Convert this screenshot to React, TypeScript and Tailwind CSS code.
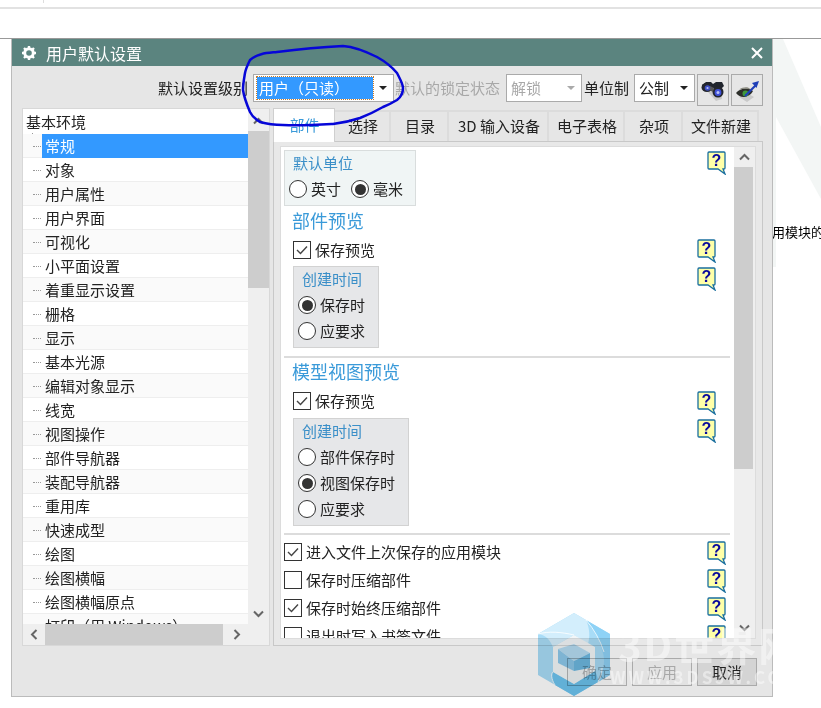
import type { ReactNode } from "react";

const treeItems = [
  "常规",
  "对象",
  "用户属性",
  "用户界面",
  "可视化",
  "小平面设置",
  "着重显示设置",
  "栅格",
  "显示",
  "基本光源",
  "编辑对象显示",
  "线宽",
  "视图操作",
  "部件导航器",
  "装配导航器",
  "重用库",
  "快速成型",
  "绘图",
  "绘图横幅",
  "绘图横幅原点",
  "打印（用 Windows）",
];

const tabs = [
  { label: "部件", width: "w-[62px]" },
  { label: "选择", width: "w-[56px]" },
  { label: "目录", width: "w-[58px]" },
  { label: "3D 输入设备", width: "w-[100px]" },
  { label: "电子表格", width: "w-[76px]" },
  { label: "杂项", width: "w-[58px]" },
  { label: "文件新建", width: "w-[76px]" },
];

function Help() {
  return (
    <svg width="19" height="24" viewBox="0 0 19 24" className="shrink-0">
      <path
        d="M2 1h15a1 1 0 0 1 1 1v15a1 1 0 0 1-1 1h-1l2 5-7-5H2a1 1 0 0 1-1-1V2a1 1 0 0 1 1-1z"
        fill="#ffffa8"
        stroke="#1a6f9e"
        strokeWidth="1.3"
      />
      <text
        x="9.5"
        y="15"
        textAnchor="middle"
        fontSize="16"
        fontWeight="700"
        fontFamily="Liberation Sans, sans-serif"
        fill="#0a0a9c"
      >
        ?
      </text>
    </svg>
  );
}

function Radio({ checked, label }: { checked?: boolean; label: string }) {
  return (
    <div className="flex items-center gap-[4px] h-[26px]">
      <span className="flex h-[18px] w-[18px] items-center justify-center rounded-full border border-[#333] bg-white">
        {checked && <span className="h-[11px] w-[11px] rounded-full bg-[#333]" />}
      </span>
      <span>{label}</span>
    </div>
  );
}

function Check({ checked, label }: { checked?: boolean; label: string }) {
  return (
    <div className="flex items-center gap-[4px]">
      <span className="flex h-[18px] w-[18px] items-center justify-center border border-[#333] bg-white">
        {checked && (
          <svg width="12" height="10" viewBox="0 0 12 10">
            <path d="M1 5l3.5 3.5L11 1.5" fill="none" stroke="#444" strokeWidth="1.4" />
          </svg>
        )}
      </span>
      <span>{label}</span>
    </div>
  );
}

function IconButton({ children }: { children: ReactNode }) {
  return (
    <div className="flex h-[32px] w-[32px] items-center justify-center border border-[#aaa] bg-[#e6e6e6]">
      {children}
    </div>
  );
}

function Combo({
  text,
  width,
  disabled,
  children,
}: {
  text?: string;
  width: string;
  disabled?: boolean;
  children?: ReactNode;
}) {
  return (
    <div className={`flex h-[28px] items-center justify-between border border-[#aaa] bg-white pl-[3px] pr-[4px] ${width}`}>
      {children ?? <span className={disabled ? "pl-[1px] text-[#a8a8a8]" : "pl-[1px]"}>{text}</span>}
      <span
        className={`mr-[2px] h-0 w-0 border-x-[4px] border-t-[4px] border-x-transparent ${disabled ? "border-t-[#aaa]" : "border-t-[#222]"}`}
      />
    </div>
  );
}

function CreateTime({ width, height, options }: { width: string; height: string; options: { label: string; checked?: boolean }[] }) {
  return (
    <div className={`ml-[9px] border border-[#d2d2d2] bg-[#e6e7e9] pl-[4px] pt-[1px] ${width} ${height}`}>
      <div className="mb-[2px] pl-[4px] leading-[22px] text-[#3a8fc8]">创建时间</div>
      {options.map((o) => (
        <Radio key={o.label} label={o.label} checked={o.checked} />
      ))}
    </div>
  );
}

export default function App() {
  return (
    <div
      className="relative h-[708px] w-[821px] overflow-hidden bg-white text-[15px] text-[#222]"
      style={{ fontFamily: '"Noto Sans CJK SC", "Noto Sans", sans-serif' }}
    >
      {/* page behind the dialog */}
      <div className="h-[9px] border-b-2 border-[#e2e2e2]">
        <div className="ml-[43px] h-[3px] w-px bg-[#ddd]" />
      </div>
      <div className="h-[30px] border-b border-[#999]" />
      <svg className="absolute left-[773px] top-[39px]" width="48" height="240" viewBox="0 0 48 240">
        <path d="M0 0h10l38 88v72L3 78v150H0z" fill="#f3f6f5" />
      </svg>
      <div className="absolute left-[772px] top-[223px] text-[13px] leading-[18px] text-black whitespace-nowrap">
        用模块的设
      </div>

      {/* dialog */}
      <div className="relative ml-[11px] h-[658px] w-[762px] border-x border-b border-[#bbb] bg-[#e6e6e6]">
        <div className="flex h-[27px] items-center bg-[#5b847f] pl-[9px] pr-[9px] text-[16px] text-white">
          <svg width="16" height="16" viewBox="0 0 16 16">
            <circle cx="8" cy="8" r="4.3" fill="none" stroke="#fff" strokeWidth="3" />
            <path
              d="M8 1v2.5M8 12.5V15M1 8h2.5M12.5 8H15M3 3l1.8 1.8M11.2 11.2L13 13M13 3l-1.8 1.8M4.8 11.2L3 13"
              stroke="#fff"
              strokeWidth="2.4"
            />
          </svg>
          <span className="ml-[9px]">用户默认设置</span>
          <svg className="ml-auto" width="12" height="12" viewBox="0 0 12 12">
            <path d="M1 1l10 10M11 1L1 11" stroke="#fff" strokeWidth="2" />
          </svg>
        </div>

        {/* settings row */}
        <div className="mt-[8px] flex h-[32px] items-start pl-[146px]">
          <span className="h-[28px] leading-[28px]">默认设置级别</span>
          <div className="ml-[5px]">
            <Combo width="w-[141px]">
              <span className="bg-[#3399ff] pl-[2px] pr-[24px] leading-[22px] text-white outline-1 outline-dotted outline-[#c77b2a]">
                用户（只读）
              </span>
            </Combo>
          </div>
          <span className="ml-[1px] h-[28px] leading-[28px] text-[#a8a8a8]">默认的锁定状态</span>
          <div className="ml-[6px]">
            <Combo width="w-[76px]" text="解锁" disabled />
          </div>
          <span className="ml-[2px] h-[28px] leading-[28px]">单位制</span>
          <div className="ml-[5px]">
            <Combo width="w-[61px]" text="公制" />
          </div>
          <div className="ml-[2px]">
            <IconButton>
              <svg width="30" height="30" viewBox="0 0 30 30">
                <path d="M10 17l8 9 6-2-1-10z" fill="#c9c9c9" />
                <path d="M4 10l4-3h5l2 2 3-2h6l2 4-2 2H4z" fill="#20242c" />
                <ellipse cx="9" cy="12.5" rx="5.5" ry="4.5" fill="#23262e" />
                <ellipse cx="20" cy="17" rx="5.5" ry="5.5" fill="#23262e" />
                <path d="M12 11l4 2-1 4-4-2z" fill="#555" />
                <circle cx="9.5" cy="13" r="2.8" fill="#3f50c4" />
                <circle cx="20" cy="17.5" r="3.4" fill="#3f50d8" />
                <circle cx="20" cy="17.5" r="1.5" fill="#b9c2f5" />
                <circle cx="9.5" cy="13" r="1.1" fill="#b9c2f5" />
              </svg>
            </IconButton>
          </div>
          <div className="ml-[2px]">
            <IconButton>
              <svg width="30" height="30" viewBox="0 0 30 30">
                <path d="M7 22l8 5 7-5-7-4z" fill="#c9c9c9" />
                <path d="M4 18c4-5 12-6 17-2-3 6-12 9-17 2z" fill="#2d2f2a" />
                <path d="M7 14.5c3-2 6-2.5 9-2l3 2c-4-1-8-1-12 0z" fill="#8a8a80" />
                <circle cx="13.5" cy="18.5" r="3" fill="#3f9a3a" />
                <path d="M13 21L24 10" stroke="#1f3fb8" strokeWidth="2.2" />
                <path d="M27 6l-7 2 4.5 5z" fill="#1f3fb8" />
              </svg>
            </IconButton>
          </div>
        </div>

        {/* main area */}
        <div className="mt-[2px] flex pl-[10px]">
          {/* tree */}
          <div className="relative h-[538px] w-[248px] overflow-hidden border border-[#d8d8d8] bg-white">
            <div className="h-[515px] overflow-hidden pr-[21px]">
              <div className="pl-[3px] leading-[25px] h-[25px]">基本环境</div>
              <div className="relative">
                <div className="absolute bottom-0 left-[9px] top-[-1px] border-l border-dotted border-[#999]" />
                {treeItems.map((item, i) => (
                  <div
                    key={item}
                    className={`relative h-[24px] border-b border-[#eeeeee] pl-[19px] leading-[23px] ${i % 2 === 1 ? "bg-white" : "bg-[#fafafa]"}`}
                  >
                    <span className="absolute left-[10px] top-[12px] w-[8px] border-t border-dotted border-[#999]" />
                    {i === 0 ? (
                      <div className="h-[24px] bg-[#3399ff] pl-[3px] text-white">{item}</div>
                    ) : (
                      <span className="pl-[3px] whitespace-nowrap">{item}</span>
                    )}
                  </div>
                ))}
              </div>
            </div>
            {/* vertical scrollbar */}
            <div className="absolute right-0 top-0 flex h-[515px] w-[21px] flex-col items-center bg-[#efefef]">
              <svg className="mt-[8px]" width="11" height="8" viewBox="0 0 11 8">
                <path d="M1 6.5l4.5-4.5L10 6.5" fill="none" stroke="#666" strokeWidth="2" />
              </svg>
              <div className="mt-[6px] h-[157px] w-full bg-[#cdcdcd]" />
              <svg className="mt-auto mb-[6px]" width="11" height="8" viewBox="0 0 11 8">
                <path d="M1 1.5l4.5 4.500L10 1.5" fill="none" stroke="#666" strokeWidth="2" />
              </svg>
            </div>
            {/* horizontal scrollbar */}
            <div className="flex h-[21px] items-center bg-[#efefef] pl-[7px]">
              <svg width="8" height="11" viewBox="0 0 8 11">
                <path d="M6.5 1L2 5.5 6.5 10" fill="none" stroke="#666" strokeWidth="2" />
              </svg>
              <div className="ml-[7px] h-full w-[178px] bg-[#cdcdcd]" />
              <svg className="ml-[10px]" width="8" height="11" viewBox="0 0 8 11">
                <path d="M1.5 1L6 5.5 1.5 10" fill="none" stroke="#666" strokeWidth="2" />
              </svg>
            </div>
          </div>

          {/* tabs and page */}
          <div className="ml-[3px] w-[490px]">
            <div className="relative flex h-[33px] items-end">
              {tabs.map((t, i) =>
                i === 0 ? (
                  <div
                    key={t.label}
                    className={`${t.width} relative -mb-px flex h-[34px] items-center justify-center border border-b-0 border-[#cfcfcf] bg-white pl-[1px] text-[#3a9ad9]`}
                  >
                    {t.label}
                  </div>
                ) : (
                  <div
                    key={t.label}
                    className={`${t.width} flex h-[31px] items-center justify-center border-r-2 border-t-2 border-[#dcdcdc] bg-[#e6e6e6] pl-[2px]`}
                  >
                    {t.label}
                  </div>
                ),
              )}
            </div>
            <div className="h-[505px] border border-[#c8c8c8] bg-[#e8e8e8] pb-[6px] pl-[6px] pr-[6px] pt-[4px]">
              <div className="flex h-[493px] overflow-hidden border border-[#dcdcdc] bg-white">
                <div className="relative h-full w-[454px] overflow-hidden pl-[3px] pt-[3px]">
                  <div className="h-[56px] w-[132px] border border-[#d9dddd] bg-[#f0f5f5] pl-[4px]">
                    <div className="mb-[1px] leading-[24px] pl-[4px] text-[#3a8fc8]">默认单位</div>
                    <div className="flex gap-[10px]">
                      <Radio label="英寸" />
                      <Radio label="毫米" checked />
                    </div>
                  </div>
                  <div className="ml-[8px] text-[18px] leading-[28px] text-[#3a9ad9]">部件预览</div>
                  <div className="ml-[9px] mt-[5px] h-[27px]">
                    <Check checked label="保存预览" />
                  </div>
                  <CreateTime
                    width="w-[86px]"
                    height="h-[82px]"
                    options={[{ label: "保存时", checked: true }, { label: "应要求" }]}
                  />
                  <div className="mt-[8px] h-[2px] w-[446px] bg-[#dcdcdc]" />
                  <div className="ml-[8px] text-[18px] leading-[26px] text-[#3a9ad9]">模型视图预览</div>
                  <div className="ml-[9px] mt-[6px] h-[28px]">
                    <Check checked label="保存预览" />
                  </div>
                  <CreateTime
                    width="w-[116px]"
                    height="h-[108px]"
                    options={[
                      { label: "部件保存时" },
                      { label: "视图保存时", checked: true },
                      { label: "应要求" },
                    ]}
                  />
                  <div className="mt-[7px] h-[2px] w-[446px] bg-[#dcdcdc]" />
                  <div className="ml-0 mt-[6px] flex flex-col gap-[6px]">
                    <div className="h-[22px]"><Check checked label="进入文件上次保存的应用模块" /></div>
                    <div className="h-[22px]"><Check label="保存时压缩部件" /></div>
                    <div className="h-[22px]"><Check checked label="保存时始终压缩部件" /></div>
                    <div className="h-[22px]"><Check label="退出时写入书签文件" /></div>
                  </div>

                  {/* help bubbles */}
                  <div className="absolute left-[426px] top-[4px]"><Help /></div>
                  <div className="absolute left-[416px] top-[92px]"><Help /></div>
                  <div className="absolute left-[416px] top-[120px]"><Help /></div>
                  <div className="absolute left-[416px] top-[244px]"><Help /></div>
                  <div className="absolute left-[416px] top-[272px]"><Help /></div>
                  <div className="absolute left-[426px] top-[394px]"><Help /></div>
                  <div className="absolute left-[426px] top-[422px]"><Help /></div>
                  <div className="absolute left-[426px] top-[450px]"><Help /></div>
                  <div className="absolute left-[426px] top-[478px]"><Help /></div>
                </div>
                {/* page scrollbar */}
                <div className="flex h-full w-[21px] flex-col items-center bg-[#efefef]">
                  <svg className="mt-[6px]" width="11" height="8" viewBox="0 0 11 8">
                    <path d="M1 6.5l4.5-4.5L10 6.5" fill="none" stroke="#666" strokeWidth="2" />
                  </svg>
                  <div className="mt-[6px] h-[302px] w-[19px] self-start bg-[#cdcdcd]" />
                  <svg className="mt-auto mb-[6px]" width="11" height="8" viewBox="0 0 11 8">
                    <path d="M1 1.5l4.5 4.5L10 1.5" fill="none" stroke="#666" strokeWidth="2" />
                  </svg>
                </div>
              </div>
            </div>
          </div>
        </div>

        {/* footer buttons */}
        <div className="mt-[12px] flex justify-end gap-[5px] pr-[15px]">
          <div className="flex h-[28px] w-[60px] items-center justify-center border border-[#aaa] bg-[#e2e2e2] text-[#a8a8a8]">确定</div>
          <div className="flex h-[28px] w-[60px] items-center justify-center border border-[#aaa] bg-[#e2e2e2] text-[#a8a8a8]">应用</div>
          <div className="flex h-[28px] w-[60px] items-center justify-center border border-[#aaa] bg-[#d4d4d4]">取消</div>
        </div>
      </div>

      {/* hand drawn circle over the level combo */}
      <svg className="pointer-events-none absolute left-0 top-0" width="821" height="708" viewBox="0 0 821 708" fill="none">
        <path
          d="M250 60C258 53 268 53 277 52C300 49 322 47 343 46C356 47 367 52 377 57C386 62 392 67 397 73C400 79 403 84 403 88C403 93 401 97 397 100C392 103 388 105 383 107C376 111 368 115 360 118C351 121 342 123 333 124C316 125 300 126 283 125C275 125 267 124 260 122C255 119 252 116 250 112C247 105 244 97 243 90C243 84 244 79 245 73C246 68 248 64 250 60z"
          stroke="#0606d8"
          strokeWidth="2.5"
        />
      </svg>

      {/* watermark */}
      <div className="pointer-events-none absolute left-[618px] top-[622px] text-[40px] font-bold leading-[44px] tracking-[2px] text-white/45 whitespace-nowrap">
        3D世界网
      </div>
      <div className="pointer-events-none absolute left-[610px] top-[668px] text-[17px] font-bold leading-[18px] tracking-[3px] text-white/45 whitespace-nowrap">
        WWW.3DSJW.COM
      </div>
      <div className="pointer-events-none absolute left-[538px] top-[613px] mix-blend-multiply">
        <svg width="72" height="83" viewBox="0 0 72 83">
          <path d="M36 0l36 21v41L36 83 0 62V21z" fill="#a8dcf7" />
          <path d="M0 21L36 0l12 7c4 9 4 17 2 24l-14-9-21 12C12 27 8 22 0 21z" fill="#d3eefc" />
          <path d="M48 7l24 14v41l-12 7c6-10 8-22 4-32-3-12-9-21-16-30z" fill="#8ed2f6" />
          <path d="M60 69L36 83 17 72c-3-4-4-9-2-13l21 12 21-13c2 4 3 8 3 11z" fill="#6cc3ef" />
          <path d="M36 22l21 12v24L36 71 15 59V34z" fill="#f2f6f8" />
          <path d="M36 31l16 9-16 8-16-12z" fill="#b5dcf2" />
          <path d="M20 36l16 12v10L20 50z" fill="#8cc8ea" />
          <path d="M36 48l16-8v15L36 58z" fill="#6db9e2" />
          <path d="M0 21c10-3 24-2 36 1M48 7c8 9 14 20 18 32M60 69c2-4 4-8 4-14M17 72c-4-6-4-12-2-13" fill="none" stroke="#fff" strokeWidth="0.8" />
        </svg>
      </div>
    </div>
  );
}
